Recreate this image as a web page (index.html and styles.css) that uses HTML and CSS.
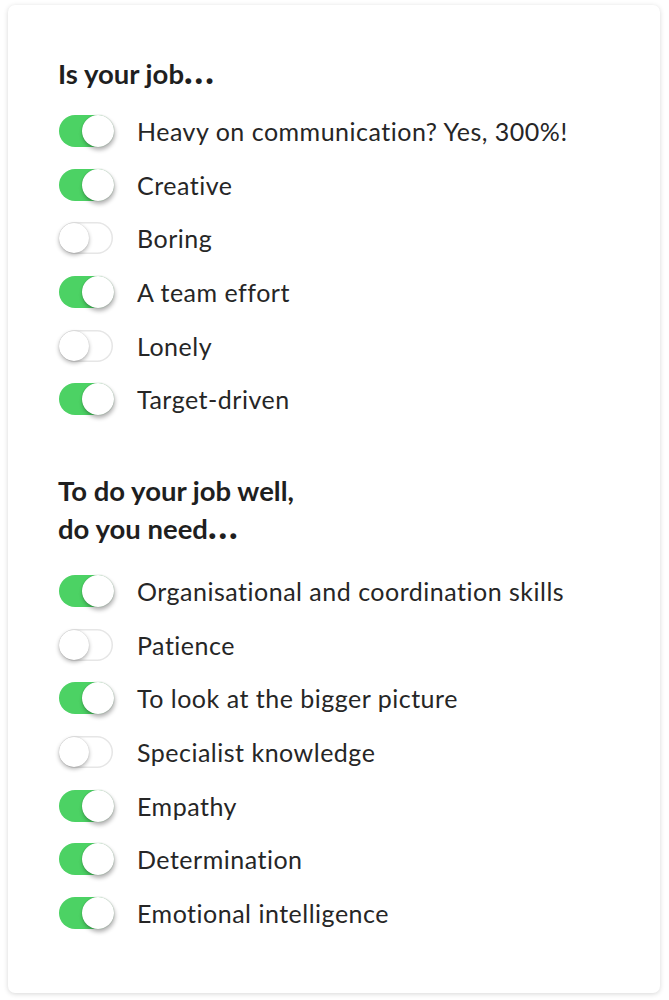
FILE: index.html
```html
<!DOCTYPE html>
<html lang="en">
<head>
  <meta charset="UTF-8">
  <title>Is your job...</title>
  <link rel="stylesheet" href="styles.css">
</head>
<body>
  <div class="card">
    <h2>Is your job<span class="dots">...</span></h2>
    <ul class="list">
      <li><span class="toggle on"></span>Heavy on communication? Yes, 300%!</li>
      <li><span class="toggle on"></span>Creative</li>
      <li><span class="toggle"></span>Boring</li>
      <li><span class="toggle on"></span>A team effort</li>
      <li><span class="toggle"></span>Lonely</li>
      <li><span class="toggle on"></span>Target-driven</li>
    </ul>

    <h2 class="second">To do your job well,<br>do you need<span class="dots">...</span></h2>
    <ul class="list">
      <li><span class="toggle on"></span>Organisational and coordination skills</li>
      <li><span class="toggle"></span>Patience</li>
      <li><span class="toggle on"></span>To look at the bigger picture</li>
      <li><span class="toggle"></span>Specialist knowledge</li>
      <li><span class="toggle on"></span>Empathy</li>
      <li><span class="toggle on"></span>Determination</li>
      <li><span class="toggle on"></span>Emotional intelligence</li>
    </ul>
  </div>
</body>
</html>
```

FILE: styles.css
```css
body {
  margin: 0;
  padding: 5px 9px 8px 8px;
  background: #ffffff;
  font-family: Lato, "Open Sans", sans-serif;
  color: #222222;
}
.card {
  height: 988px;
  box-sizing: border-box;
  padding: 50px 20px 0 50px;
  background: #ffffff;
  border-radius: 7px;
  box-shadow: 0 1px 5px rgba(0, 0, 0, 0.16);
}
h2 {
  margin: 0 0 11px 0;
  font-size: 27.5px;
  font-weight: 700;
  line-height: 38px;
  color: #1f1f1f;
}
h2.second {
  margin-top: 46px;
  margin-bottom: 16px;
}
.dots {
  font-size: 36px;
  font-weight: 900;
  line-height: 0;
  letter-spacing: 2px;
}
.list {
  list-style: none;
  margin: 0;
  padding: 0;
}
.list li {
  display: flex;
  align-items: center;
  height: 53.7px;
  font-size: 25px;
  font-weight: 400;
  letter-spacing: 0.5px;
  color: #262626;
}
.toggle {
  position: relative;
  flex: none;
  width: 54px;
  height: 32px;
  margin-left: 1px;
  margin-right: 24px;
  border-radius: 16px;
  background: #ffffff;
  box-shadow: inset 0 0 0 1.5px #e6e6e6;
}
.toggle::after {
  content: "";
  position: absolute;
  left: 0;
  top: 1px;
  width: 30px;
  height: 30px;
  border-radius: 50%;
  background: #ffffff;
  box-shadow: 0 2px 4px rgba(0, 0, 0, 0.3), 0 0 1px rgba(0, 0, 0, 0.2);
}
.toggle.on {
  background: #4cd264;
  box-shadow: none;
}
.toggle.on::after {
  left: 23px;
  top: 0;
  width: 32px;
  height: 32px;
  box-shadow: 1px 3px 4px rgba(0, 0, 0, 0.3), 0 0 1px rgba(0, 90, 20, 0.5);
}
```
